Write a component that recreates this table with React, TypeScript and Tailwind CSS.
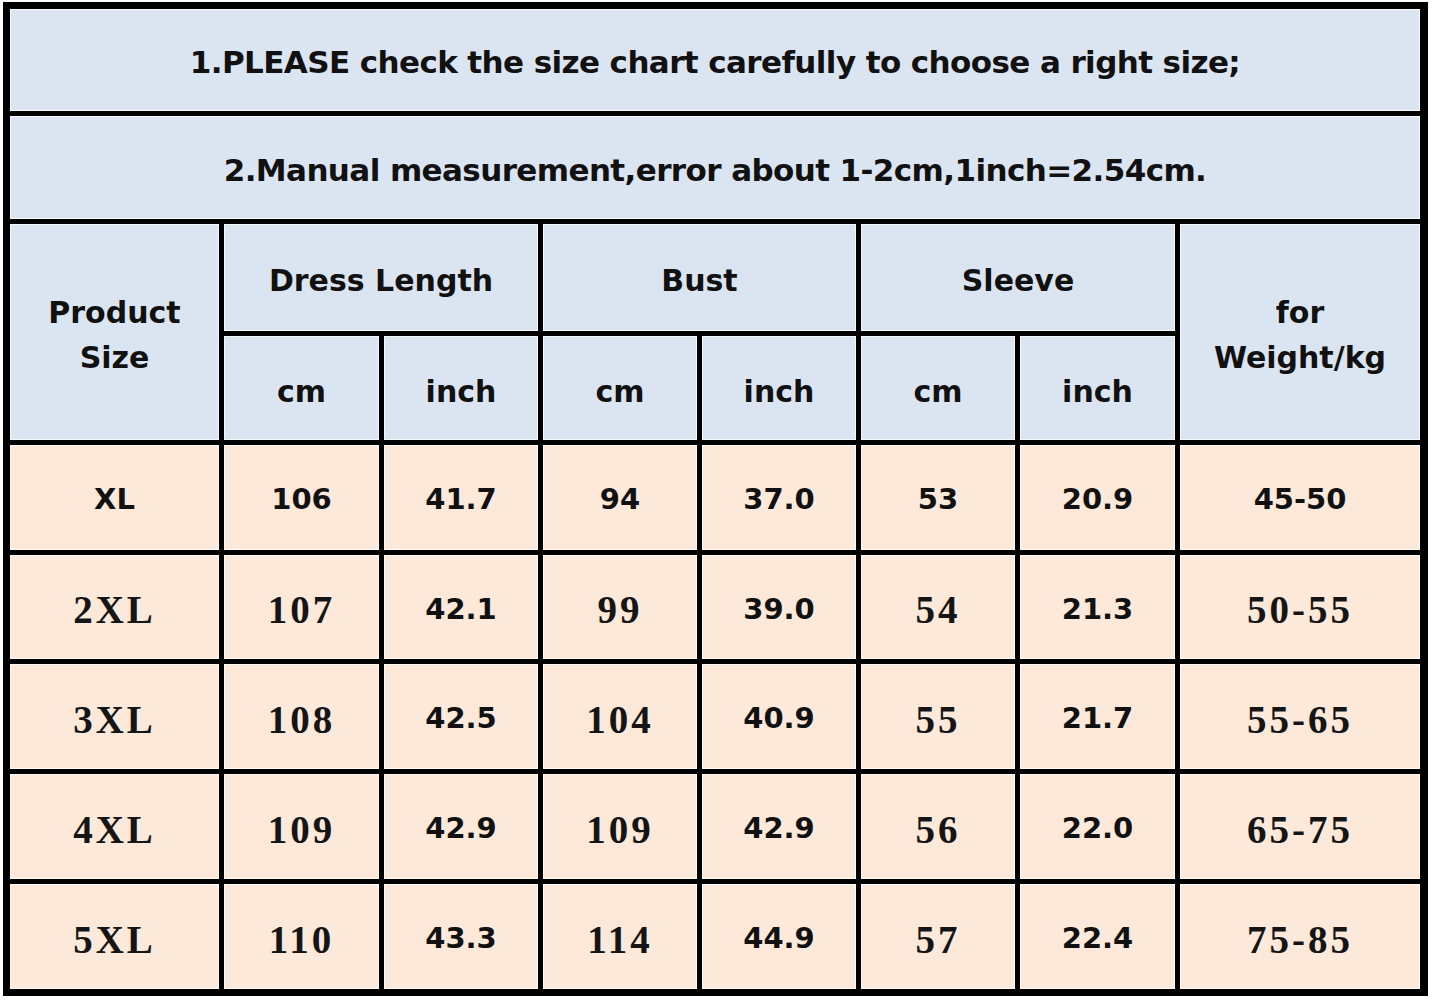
import React from 'react';

type Cell = { text: string; serif?: boolean };

const rows: Cell[][] = [
  [
    { text: 'XL' },
    { text: '106' },
    { text: '41.7' },
    { text: '94' },
    { text: '37.0' },
    { text: '53' },
    { text: '20.9' },
    { text: '45-50' },
  ],
  [
    { text: '2XL', serif: true },
    { text: '107', serif: true },
    { text: '42.1' },
    { text: '99', serif: true },
    { text: '39.0' },
    { text: '54', serif: true },
    { text: '21.3' },
    { text: '50-55', serif: true },
  ],
  [
    { text: '3XL', serif: true },
    { text: '108', serif: true },
    { text: '42.5' },
    { text: '104', serif: true },
    { text: '40.9' },
    { text: '55', serif: true },
    { text: '21.7' },
    { text: '55-65', serif: true },
  ],
  [
    { text: '4XL', serif: true },
    { text: '109', serif: true },
    { text: '42.9' },
    { text: '109', serif: true },
    { text: '42.9' },
    { text: '56', serif: true },
    { text: '22.0' },
    { text: '65-75', serif: true },
  ],
  [
    { text: '5XL', serif: true },
    { text: '110', serif: true },
    { text: '43.3' },
    { text: '114', serif: true },
    { text: '44.9' },
    { text: '57', serif: true },
    { text: '22.4' },
    { text: '75-85', serif: true },
  ],
];

const sans = "font-['DejaVu_Sans',Verdana,sans-serif] font-bold text-[29px] text-[#111] pt-[5px]";
const head = "font-['DejaVu_Sans',Verdana,sans-serif] font-bold text-[30px] text-[#111] pt-[6px]";
const note =
  "font-['DejaVu_Sans',Verdana,sans-serif] font-bold text-[31px] tracking-[-0.6px] text-[#111] pt-[5px]";
const serif =
  "font-['Liberation_Serif',serif] font-bold text-[39px] tracking-[3px] text-[#151515] pt-[7px]";

const blue =
  'bg-[#dbe5f1] flex items-center justify-center text-center shadow-[inset_0_0_0_1px_rgba(255,255,255,0.75)]';
const peach =
  'bg-[#fce9da] flex items-center justify-center text-center shadow-[inset_0_0_0_1px_rgba(255,255,255,0.75)]';

export default function App() {
  return (
    <div className="w-[1433px] h-[1000px] bg-white overflow-hidden pt-[2px] pl-[3px]">
      <div className="w-[1425px] border-[7px] border-black bg-black">
        <div className="grid grid-cols-[209px_155px_154px_154px_154px_154px_155px_240px] grid-rows-[102px_103px_107px_104px_105px_104px_105px_105px_105px] gap-[5px]">
          <div className={`${blue} col-span-8 ${note}`}>
            1.PLEASE check the size chart carefully to choose a right size;
          </div>
          <div className={`${blue} col-span-8 ${note}`}>
            2.Manual measurement,error about 1-2cm,1inch=2.54cm.
          </div>

          <div className={`${blue} row-span-2 ${head} leading-[45px]`}>
            Product
            <br />
            Size
          </div>
          <div className={`${blue} col-span-2 ${head}`}>Dress Length</div>
          <div className={`${blue} col-span-2 ${head}`}>Bust</div>
          <div className={`${blue} col-span-2 ${head}`}>Sleeve</div>
          <div className={`${blue} row-span-2 ${head} leading-[45px]`}>
            for
            <br />
            Weight/kg
          </div>
          <div className={`${blue} ${head}`}>cm</div>
          <div className={`${blue} ${head}`}>inch</div>
          <div className={`${blue} ${head}`}>cm</div>
          <div className={`${blue} ${head}`}>inch</div>
          <div className={`${blue} ${head}`}>cm</div>
          <div className={`${blue} ${head}`}>inch</div>

          {rows.map((row, i) =>
            row.map((cell, j) => (
              <div key={`${i}-${j}`} className={`${peach} ${cell.serif ? serif : sans}`}>
                {cell.text}
              </div>
            ))
          )}
        </div>
      </div>
    </div>
  );
}
